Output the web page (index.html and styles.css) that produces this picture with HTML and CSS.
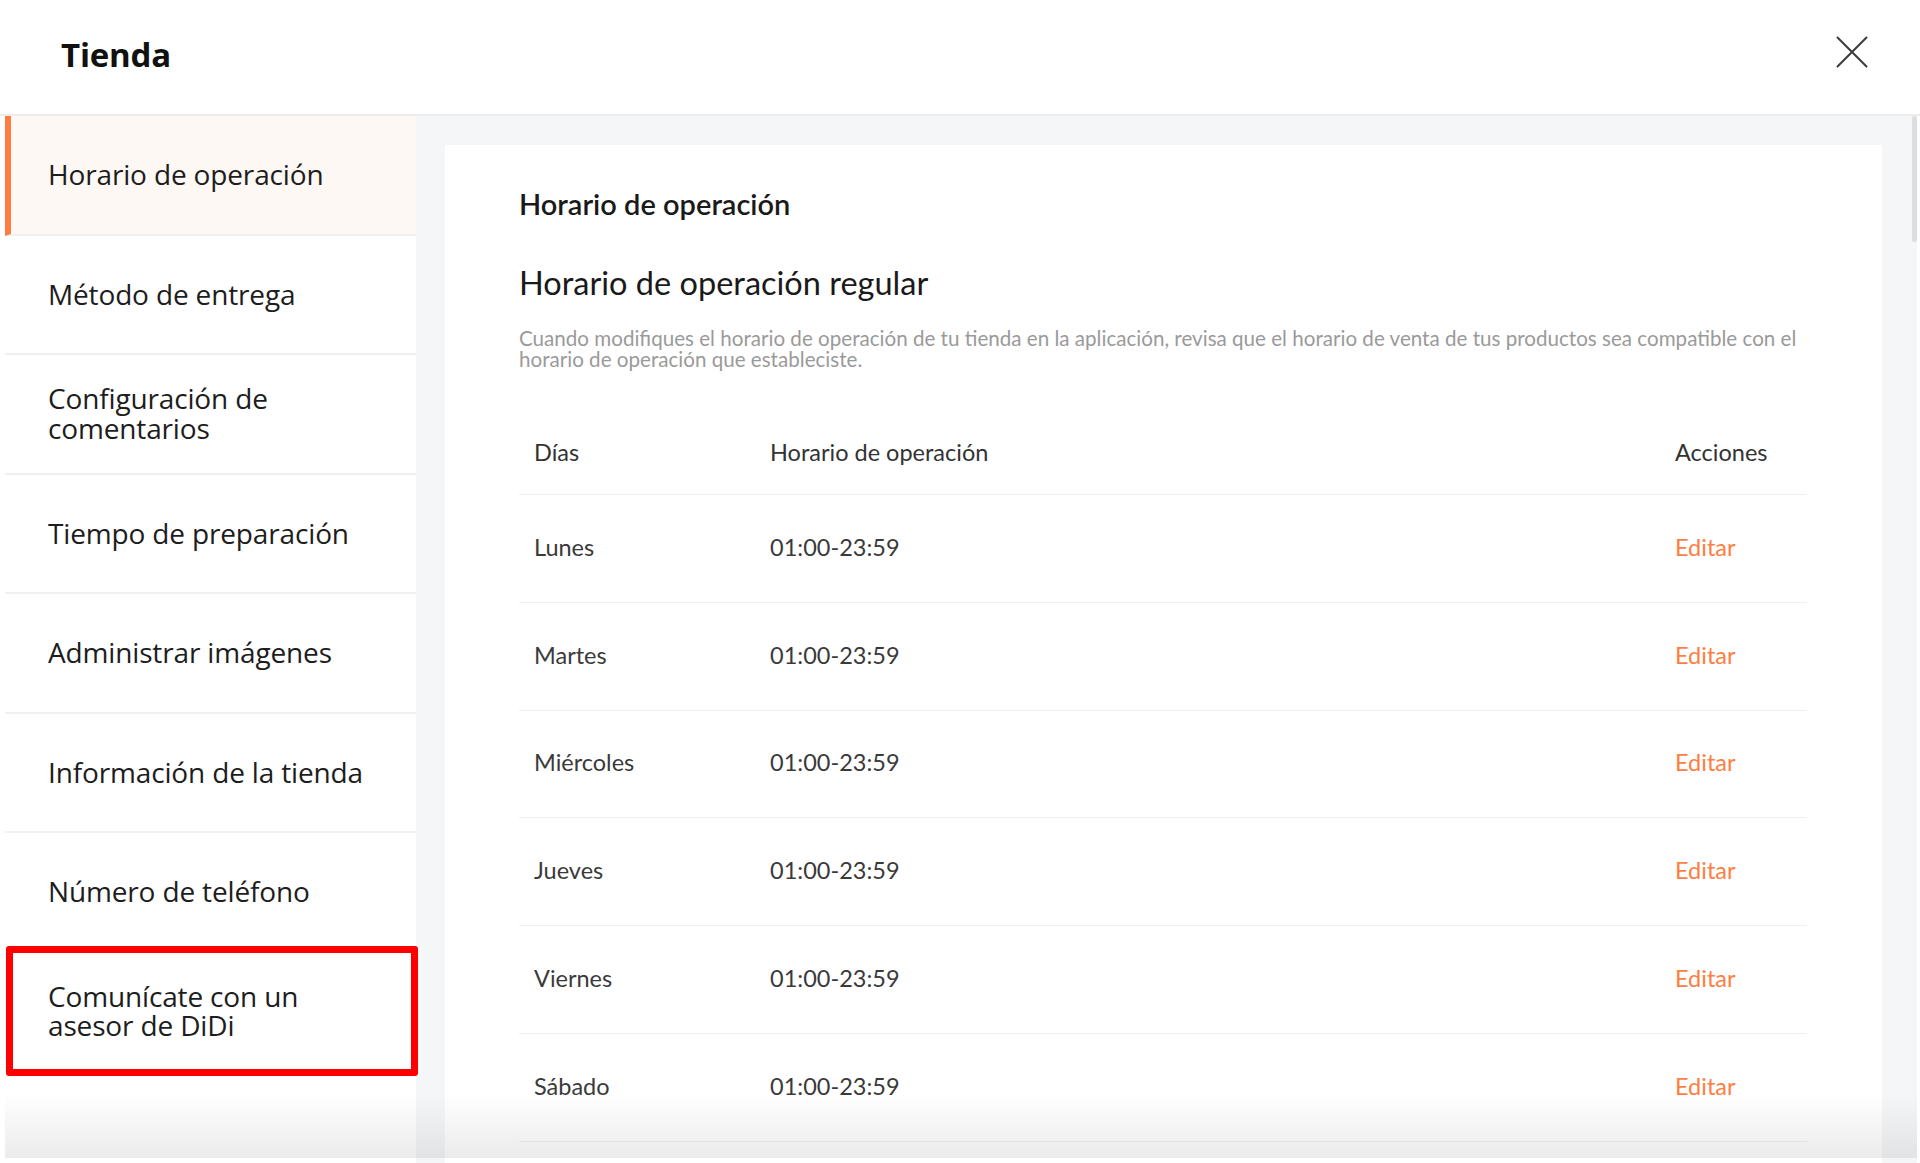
FILE: index.html
```html
<!DOCTYPE html>
<html lang="es">
<head>
<meta charset="utf-8">
<title>Tienda</title>
<link rel="stylesheet" href="styles.css">
</head>
<body>
<div class="modal">
  <header class="header">
    <h1 class="title">Tienda</h1>
    <button class="close" aria-label="Cerrar">
      <svg width="32" height="32" viewBox="0 0 32 32"><path d="M1.5 1.5 L30.5 30.5 M30.5 1.5 L1.5 30.5" stroke="#3a3a3a" stroke-width="2" fill="none" stroke-linecap="round"/></svg>
    </button>
  </header>
  <div class="body">
    <nav class="sidebar">
      <div class="item active">Horario de operación</div>
      <div class="item">Método de entrega</div>
      <div class="item">Configuración de<br>comentarios</div>
      <div class="item">Tiempo de preparación</div>
      <div class="item">Administrar imágenes</div>
      <div class="item">Información de la tienda</div>
      <div class="item">Número de teléfono</div>
      <div class="item highlighted">Comunícate con un<br>asesor de DiDi</div>
    </nav>
    <main class="main">
      <section class="card">
        <h2 class="h-section">Horario de operación</h2>
        <h3 class="h-sub">Horario de operación regular</h3>
        <p class="desc">Cuando modifiques el horario de operación de tu tienda en la aplicación, revisa que el horario de venta de tus productos sea compatible con el horario de operación que estableciste.</p>
        <div class="table">
          <div class="row head"><div>Días</div><div>Horario de operación</div><div>Acciones</div></div>
          <div class="row"><div>Lunes</div><div>01:00-23:59</div><div class="edit">Editar</div></div>
          <div class="row"><div>Martes</div><div>01:00-23:59</div><div class="edit">Editar</div></div>
          <div class="row"><div>Miércoles</div><div>01:00-23:59</div><div class="edit">Editar</div></div>
          <div class="row"><div>Jueves</div><div>01:00-23:59</div><div class="edit">Editar</div></div>
          <div class="row"><div>Viernes</div><div>01:00-23:59</div><div class="edit">Editar</div></div>
          <div class="row"><div>Sábado</div><div>01:00-23:59</div><div class="edit">Editar</div></div>
        </div>
      </section>
    </main>
    <div class="scrollbar"><div class="thumb"></div></div>
  </div>
  <div class="fade"></div>
</div>
</body>
</html>
```

FILE: styles.css
```css
* { box-sizing: border-box; }
html, body { margin: 0; padding: 0; }
body {
  width: 1920px;
  height: 1163px;
  overflow: hidden;
  background: #ffffff;
  font-family: "Open Sans", "Noto Sans", sans-serif;
  color: #1a1a1a;
}
.modal {
  position: relative;
  height: 1163px;
  display: flex;
  flex-direction: column;
}
.header {
  height: 116px;
  flex: none;
  display: flex;
  align-items: center;
  justify-content: space-between;
  padding: 0 52px 6px 61px;
  border-bottom: 2px solid #ececec;
}
.title {
  margin: 0;
  font-size: 33px;
  font-weight: 700;
  letter-spacing: -0.2px;
  color: #111;
}
.close {
  border: 0;
  background: none;
  padding: 0;
  width: 32px;
  height: 32px;
  margin-bottom: 4px;
  display: flex;
}
.body {
  flex: 1;
  display: flex;
  min-height: 0;
  padding-left: 5px;
  padding-right: 3px;
}
.sidebar {
  width: 411px;
  flex: none;
  background: #fff;
}
.item {
  position: relative;
  height: 119.5px;
  display: flex;
  align-items: center;
  padding-left: 43px;
  font-size: 28px;
  line-height: 29.5px;
  letter-spacing: -0.15px;
  color: #1d1d1d;
  border-bottom: 2px solid #f0f0f0;
}
.item.active {
  background: #fef8f4;
  border-left: 6px solid #ff7d41;
  padding-left: 37px;
}
.item.highlighted::after {
  content: "";
  position: absolute;
  left: 1px;
  right: -2px;
  top: -7px;
  bottom: -6px;
  border: 7px solid #ff0000;
  border-radius: 3px;
}
.main {
  flex: 1;
  background: #f5f6f8;
  padding: 29px 30px 0 29px;
  overflow: hidden;
}
.card {
  background: #fff;
  padding: 41px 75px 0 74px;
  height: 100%;
  font-family: "Lato", "Open Sans", sans-serif;
}
.h-section {
  margin: 0;
  font-size: 29px;
  line-height: 36px;
  font-weight: 600;
  color: #1a1a1a;
}
.h-sub {
  margin: 41px 0 0;
  font-size: 32.5px;
  line-height: 40px;
  font-weight: 400;
  color: #1a1a1a;
}
.desc {
  margin: 25px 0 0;
  font-size: 20.6px;
  line-height: 21px;
  color: #9a9a9a;
}
.table {
  margin-top: 39px;
}
.row {
  display: grid;
  grid-template-columns: 236px 1fr 147px;
  height: 107.8px;
  padding-bottom: 3px;
  align-items: center;
  border-bottom: 1px solid #eef0f4;
  font-size: 23.5px;
  color: #3a3a3a;
}
.row > div { padding-left: 15px; }
.row.head {
  height: 86px;
  padding-bottom: 0;
  color: #333;
}
.edit {
  color: #ff7d41;
}
.scrollbar {
  width: 5px;
  flex: none;
  background: #f5f6f8;
}
.thumb {
  height: 126px;
  background: #dedede;
  border-radius: 2px;
}
.fade {
  position: absolute;
  left: 5px;
  right: 3px;
  bottom: 5px;
  height: 65px;
  background: linear-gradient(rgba(0,0,0,0), rgba(0,0,0,0.08));
  pointer-events: none;
}
```
